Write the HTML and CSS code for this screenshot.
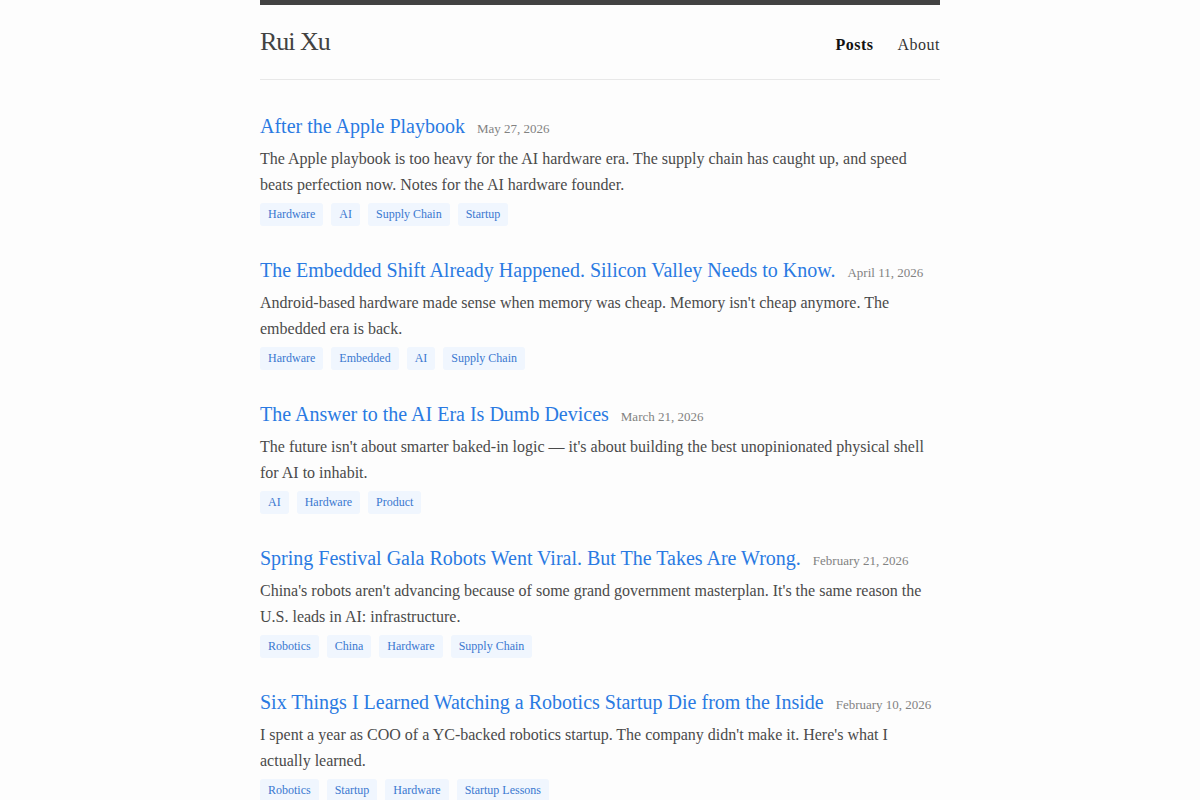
FILE: index.html
```html
<!DOCTYPE html>
<html lang="en">
  <head>
    <meta charset="UTF-8" />
    <meta name="viewport" content="width=device-width, initial-scale=1.0" />
    <title>Rui Xu</title>
    <link rel="stylesheet" href="styles.css">
  </head>
  <body>
    <div class="wrapper">
      <header class="site-header">
        <a class="site-title" href="#">Rui Xu</a>
        <nav class="site-nav">
          <a href="#" class="active">Posts</a>
          <a href="#">About</a>
        </nav>
      </header>

      <ul class="post-list">
        <li class="post">
          <h2 class="post-title">
            <a href="#">After the Apple Playbook</a>
            <span class="post-date">May 27, 2026</span>
          </h2>
          <p class="post-excerpt">The Apple playbook is too heavy for the AI hardware era. The supply chain has caught up, and speed beats perfection now. Notes for the AI hardware founder.</p>
          <div class="tags">
            <span class="tag">Hardware</span>
            <span class="tag">AI</span>
            <span class="tag">Supply Chain</span>
            <span class="tag">Startup</span>
          </div>
        </li>

        <li class="post">
          <h2 class="post-title">
            <a href="#">The Embedded Shift Already Happened. Silicon Valley Needs to Know.</a>
            <span class="post-date">April 11, 2026</span>
          </h2>
          <p class="post-excerpt">Android-based hardware made sense when memory was cheap. Memory isn't cheap anymore. The embedded era is back.</p>
          <div class="tags">
            <span class="tag">Hardware</span>
            <span class="tag">Embedded</span>
            <span class="tag">AI</span>
            <span class="tag">Supply Chain</span>
          </div>
        </li>

        <li class="post">
          <h2 class="post-title">
            <a href="#">The Answer to the AI Era Is Dumb Devices</a>
            <span class="post-date">March 21, 2026</span>
          </h2>
          <p class="post-excerpt">The future isn't about smarter baked-in logic — it's about building the best unopinionated physical shell for AI to inhabit.</p>
          <div class="tags">
            <span class="tag">AI</span>
            <span class="tag">Hardware</span>
            <span class="tag">Product</span>
          </div>
        </li>

        <li class="post">
          <h2 class="post-title">
            <a href="#">Spring Festival Gala Robots Went Viral. But The Takes Are Wrong.</a>
            <span class="post-date">February 21, 2026</span>
          </h2>
          <p class="post-excerpt">China's robots aren't advancing because of some grand government masterplan. It's the same reason the U.S. leads in AI: infrastructure.</p>
          <div class="tags">
            <span class="tag">Robotics</span>
            <span class="tag">China</span>
            <span class="tag">Hardware</span>
            <span class="tag">Supply Chain</span>
          </div>
        </li>

        <li class="post">
          <h2 class="post-title">
            <a href="#">Six Things I Learned Watching a Robotics Startup Die from the Inside</a>
            <span class="post-date">February 10, 2026</span>
          </h2>
          <p class="post-excerpt">I spent a year as COO of a YC-backed robotics startup. The company didn't make it. Here's what I actually learned.</p>
          <div class="tags">
            <span class="tag">Robotics</span>
            <span class="tag">Startup</span>
            <span class="tag">Hardware</span>
            <span class="tag">Startup Lessons</span>
          </div>
        </li>
      </ul>
    </div>
  </body>
</html>
```

FILE: styles.css
```css
* {
  margin: 0;
  padding: 0;
  box-sizing: border-box;
}

body {
  background: #fdfdfd;
  color: #444;
  font-family: "Liberation Serif", "Times New Roman", serif;
  font-size: 16px;
}

a {
  text-decoration: none;
}

.wrapper {
  max-width: 680px;
  margin: 0 auto;
}

/* Header */
.site-header {
  display: flex;
  justify-content: space-between;
  align-items: baseline;
  border-top: 5px solid #424242;
  border-bottom: 1px solid #e8e8e8;
  padding: 9px 0 9px;
}

.site-title {
  font-size: 26px;
  line-height: 56px;
  color: #424242;
  letter-spacing: -1px;
}

.site-nav {
  display: flex;
  gap: 24px;
}

.site-nav a {
  color: #333;
  font-size: 16px;
  letter-spacing: 0.5px;
}

.site-nav a.active {
  color: #111;
  font-weight: bold;
}

/* Post list */
.post-list {
  list-style: none;
  padding-top: 33px;
}

.post {
  margin-bottom: 31px;
}

.post-title {
  font-size: 20px;
  font-weight: normal;
  line-height: 26px;
}

.post-title a {
  color: #2a7ae2;
}

.post-date {
  font-size: 13px;
  color: #828282;
  margin-left: 7px;
}

.post-excerpt {
  margin-top: 4px;
  line-height: 26px;
  color: #4a4a4a;
}

.tags {
  display: flex;
  flex-wrap: wrap;
  gap: 8px;
  margin-top: 5px;
}

.tag {
  font-size: 12px;
  line-height: 15px;
  padding: 4px 8px;
  border-radius: 3px;
  background: #f0f6fe;
  color: #3a78d0;
}
```
